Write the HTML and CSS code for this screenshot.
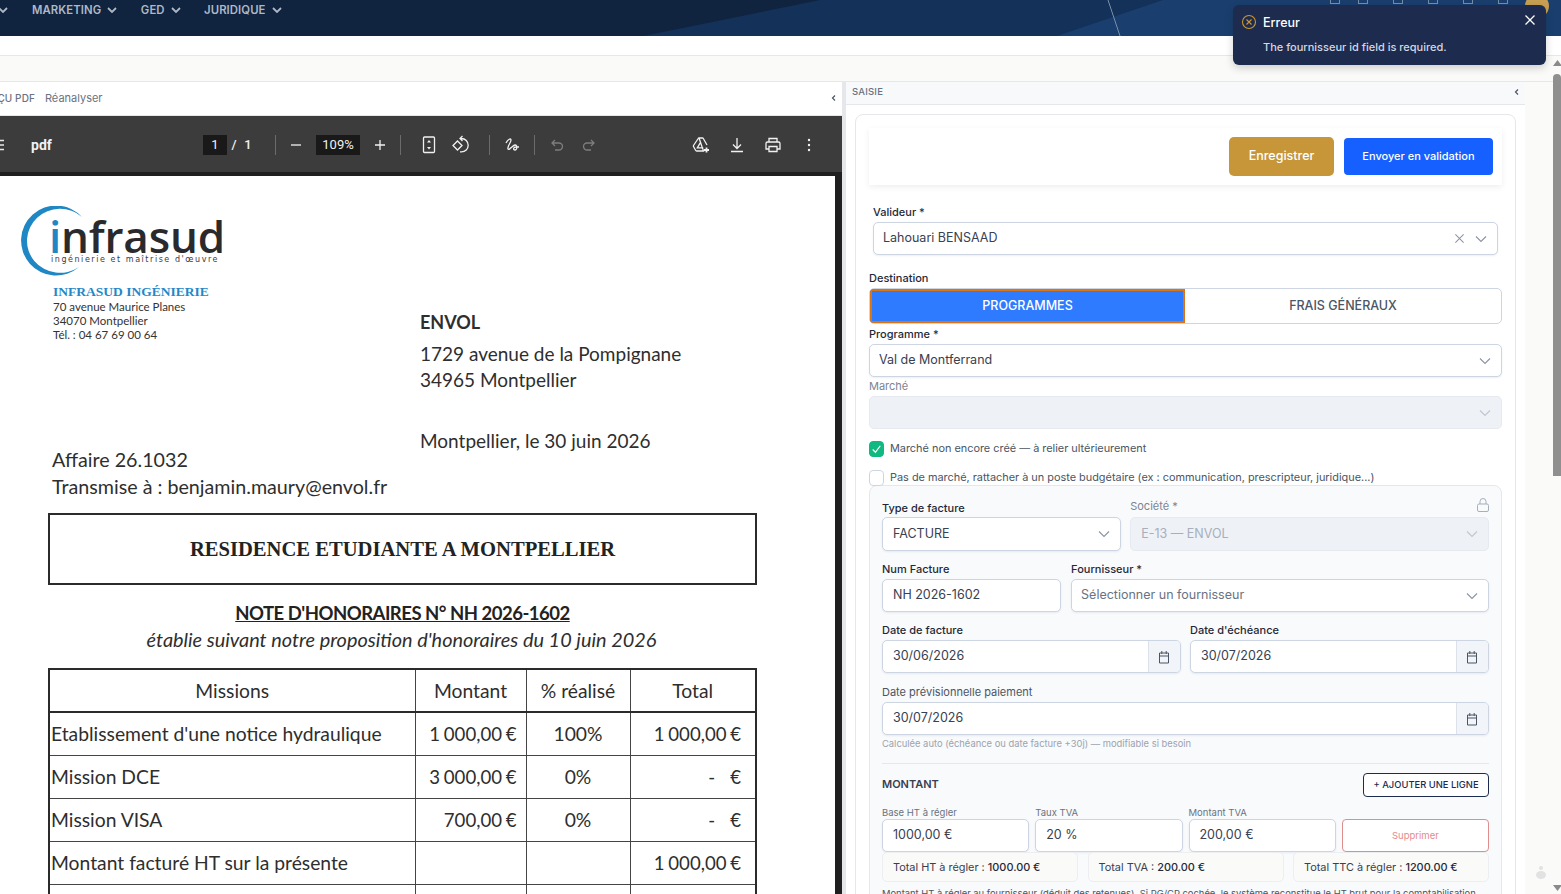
FILE: index.html
```html
<!DOCTYPE html>
<html lang="fr">
<head>
<meta charset="utf-8">
<title>Saisie facture</title>
<link rel="stylesheet" href="styles.css">
</head>
<body>

<header class="topbar">
  <svg class="topbar-bg" viewBox="0 0 1561 36" preserveAspectRatio="none" aria-hidden="true">
    <polygon points="0,0 820,0 643,36 0,36" fill="#10233f"/>
    <polygon points="1163,0 1561,0 1561,36 1057,36" fill="#1a3f6e"/>
    <line x1="1108" y1="0" x2="1120" y2="36" stroke="#7d8ea6" stroke-width="1"/>
  </svg>
  <nav class="nav">
    <span class="nav-item nav-cut"><svg class="nav-chev" viewBox="0 0 10 6"><path d="M1 1l4 4 4-4"/></svg></span>
    <span class="nav-item">MARKETING <svg class="nav-chev" viewBox="0 0 10 6"><path d="M1 1l4 4 4-4"/></svg></span>
    <span class="nav-item">GED <svg class="nav-chev" viewBox="0 0 10 6"><path d="M1 1l4 4 4-4"/></svg></span>
    <span class="nav-item">JURIDIQUE <svg class="nav-chev" viewBox="0 0 10 6"><path d="M1 1l4 4 4-4"/></svg></span>
  </nav>
  <div class="top-right">
    <span class="top-ico top-ico-first"></span>
    <span class="top-ico"></span>
    <span class="top-ico"></span>
    <span class="top-ico"></span>
    <span class="top-ico"></span>
    <span class="top-ico"></span>
    <span class="avatar"></span>
  </div>
</header>

<div class="toast">
  <svg class="toast-icon" viewBox="0 0 16 16"><circle cx="8" cy="8" r="6.500"/><path d="M5.500 5.500l5 5M10.500 5.500l-5 5"/></svg>
  <div class="toast-body">
    <div class="toast-title">Erreur</div>
    <div class="toast-msg">The fournisseur id field is required.</div>
  </div>
  <svg class="toast-close" viewBox="0 0 12 12"><path d="M1.500 1.500l9 9M10.500 1.500l-9 9"/></svg>
</div>

<div class="white-strip"></div>
<div class="grey-strip"></div>

<div class="workspace">
  <section class="left-panel">
    <div class="left-head">
      <span class="left-title">APERÇU PDF</span>
      <span class="left-link">Réanalyser</span>
      <svg class="collapse" viewBox="0 0 6 8"><path d="M4 1.500L1.500 4 4 6.500"/></svg>
    </div>

    <div class="pdf-toolbar">
      <svg class="pdf-menu" viewBox="0 0 20 20"><path d="M3 5.500h14M3 10h14M3 14.500h14"/></svg>
      <span class="pdf-name">pdf</span>
      <span class="pdf-pages"><span class="pdf-box pdf-box-page">1</span><span class="pdf-of">/</span><span class="pdf-of">1</span></span>
      <span class="pdf-sep pdf-sep-a"></span>
      <svg class="pdf-ico ico-minus" viewBox="0 0 20 20"><path d="M5 10h10"/></svg>
      <span class="pdf-box pdf-box-zoom">109%</span>
      <svg class="pdf-ico ico-plus" viewBox="0 0 20 20"><path d="M5 10h10M10 5v10"/></svg>
      <span class="pdf-sep pdf-sep-b"></span>
      <svg class="pdf-ico ico-fit" viewBox="0 0 20 20"><rect x="4.500" y="2" width="11" height="15.500" rx="1"/><path class="solid" d="M10 5l2 2.500H8zM10 14.500L8 12h4z"/></svg>
      <svg class="pdf-ico ico-rotate" viewBox="0 0 20 20"><path d="M6.500 6l4.500 4.500-4.500 4.500L2 10.500z"/><path d="M9 3.500h1.500a6.700 6.700 0 0 1 0 13.400H9M11.500 1L9 3.500 11.500 6"/></svg>
      <span class="pdf-sep pdf-sep-c"></span>
      <svg class="pdf-ico ico-draw" viewBox="0 0 20 20"><path d="M4 8C6 4 9 3 9 5 9 8 5 11 6 14c1 2 5-4 7-4 3 0 2 5 0 5s-2-3 1-3h3"/></svg>
      <span class="pdf-sep pdf-sep-d"></span>
      <svg class="pdf-ico dim ico-undo" viewBox="0 0 20 20"><path d="M8 5L5 8l3 3M5 8h7a3.500 3.500 0 0 1 0 7H8"/></svg>
      <svg class="pdf-ico dim ico-redo" viewBox="0 0 20 20"><path d="M12 5l3 3-3 3M15 8H8a3.500 3.500 0 0 0 0 7h4"/></svg>
      <svg class="pdf-ico ico-drive" viewBox="0 0 20 20"><path d="M8 3h3.500a1 1 0 0 1 .8.500l3.700 6.500M12.500 16H5.500a1 1 0 0 1-.8-.500L2.500 11.500a1 1 0 0 1 0-1L7.200 3.500A1 1 0 0 1 8 3zM9.800 6.800l-3.500 6h6"/><path class="thick" d="M15.500 12.500v5M13 15h5"/></svg>
      <svg class="pdf-ico ico-down" viewBox="0 0 20 20"><path d="M10 3v10M6 9.500l4 4 4-4M4 16.500h12"/></svg>
      <svg class="pdf-ico ico-print" viewBox="0 0 20 20"><path d="M6 7V3.500h8V7M5.500 14H3V8.500A1.500 1.500 0 0 1 4.500 7h11A1.500 1.500 0 0 1 17 8.500V14h-2.500M6 11.500h8v5H6z"/></svg>
      <svg class="pdf-ico ico-more" viewBox="0 0 20 20"><circle cx="10" cy="5" r="1.200"/><circle cx="10" cy="10" r="1.200"/><circle cx="10" cy="15" r="1.200"/></svg>
    </div>

    <div class="pdf-stage">
      <article class="pdf-page">
        <div class="letter-top">
          <div class="letter-left">
            <div class="logo">
              <svg class="logo-arc" viewBox="0 0 63 71"><path d="M62 11A35 35 0 1 0 59 61 33 32 0 1 1 62 11z"/></svg>
              <div class="logo-word"><span class="logo-i">i</span>nfrasud</div>
              <div class="logo-tag">ingénierie et maîtrise d'œuvre</div>
            </div>
            <div class="company">
              <div class="company-name">INFRASUD INGÉNIERIE</div>
              <div>70 avenue Maurice Planes</div>
              <div>34070 Montpellier</div>
              <div>Tél. : 04 67 69 00 64</div>
            </div>
            <div class="affaire">
              <div>Affaire 26.1032</div>
              <div>Transmise à : benjamin.maury@envol.fr</div>
            </div>
          </div>
          <div class="letter-right">
            <div class="dest-name">ENVOL</div>
            <div>1729 avenue de la Pompignane</div>
            <div>34965 Montpellier</div>
            <div class="letter-date">Montpellier, le 30 juin 2026</div>
          </div>
        </div>

        <div class="object-box">RESIDENCE ETUDIANTE A MONTPELLIER</div>
        <h2 class="note-title">NOTE D'HONORAIRES N° NH 2026-1602</h2>
        <p class="note-sub">établie suivant notre proposition d'honoraires du 10 juin 2026</p>

        <table class="note-table">
          <colgroup><col class="col-a"><col class="col-b"><col class="col-c"><col class="col-d"></colgroup>
          <tr class="head"><td>Missions</td><td>Montant</td><td>% réalisé</td><td>Total</td></tr>
          <tr><td class="l">Etablissement d'une notice hydraulique</td><td class="r">1 000,00 €</td><td>100%</td><td class="r tot">1 000,00 €</td></tr>
          <tr><td class="l">Mission DCE</td><td class="r">3 000,00 €</td><td>0%</td><td class="r tot">-&nbsp;&nbsp;&nbsp;&nbsp;€</td></tr>
          <tr><td class="l">Mission VISA</td><td class="r">700,00 €</td><td>0%</td><td class="r tot">-&nbsp;&nbsp;&nbsp;&nbsp;€</td></tr>
          <tr><td class="l">Montant facturé HT sur la présente</td><td></td><td></td><td class="r tot">1 000,00 €</td></tr>
          <tr><td></td><td></td><td></td><td></td></tr>
        </table>
      </article>
    </div>
  </section>

  <div class="splitter"></div>

  <section class="right-panel">
    <div class="right-head">
      <span>SAISIE</span>
      <svg class="collapse" viewBox="0 0 6 8"><path d="M4 1.500L1.500 4 4 6.500"/></svg>
    </div>

    <div class="card">
      <div class="action-bar">
        <button class="btn btn-gold">Enregistrer</button>
        <button class="btn btn-blue">Envoyer en validation</button>
      </div>

      <div class="block block-valideur">
        <label class="lbl">Valideur *</label>
        <div class="ctl">
          <span class="ctl-text">Lahouari BENSAAD</span>
          <svg class="ico-clear" viewBox="0 0 12 12"><path d="M1.500 1.500l9 9M10.500 1.500l-9 9"/></svg>
          <svg class="chev" viewBox="0 0 12 8"><path d="M1 1.500l5 5 5-5"/></svg>
        </div>
      </div>

      <div class="block block-dest">
        <label class="lbl">Destination</label>
        <div class="toggle">
          <span class="toggle-on">PROGRAMMES</span>
          <span class="toggle-off">FRAIS GÉNÉRAUX</span>
        </div>
      </div>

      <div class="block block-prog">
        <label class="lbl">Programme *</label>
        <div class="ctl ctl-sm">
          <span class="ctl-text">Val de Montferrand</span>
          <svg class="chev" viewBox="0 0 12 8"><path d="M1 1.500l5 5 5-5"/></svg>
        </div>
      </div>

      <div class="block block-marche">
        <label class="lbl lbl-off">Marché</label>
        <div class="ctl ctl-off">
          <span class="ctl-text"></span>
          <svg class="chev" viewBox="0 0 12 8"><path d="M1 1.500l5 5 5-5"/></svg>
        </div>
      </div>

      <div class="check check-a">
        <span class="box box-on"><svg viewBox="0 0 12 12"><path d="M2.500 6.500l2.500 2.500 4.500-6"/></svg></span>
        <span class="check-text">Marché non encore créé — à relier ultérieurement</span>
      </div>
      <div class="check check-b">
        <span class="box"></span>
        <span class="check-text">Pas de marché, rattacher à un poste budgétaire (ex : communication, prescripteur, juridique...)</span>
      </div>

      <div class="sub-panel">
        <div class="row row-type">
          <div>
            <label class="lbl">Type de facture</label>
            <div class="ctl">
              <span class="ctl-text">FACTURE</span>
              <svg class="chev" viewBox="0 0 12 8"><path d="M1 1.500l5 5 5-5"/></svg>
            </div>
          </div>
          <div>
            <div class="lbl-lock">
              <label class="lbl lbl-off">Société *</label>
              <svg class="lock" viewBox="0 0 12 14"><rect x=".5" y="6" width="11" height="7.500" rx="1.500"/><path d="M3 6V3.500a3 3 0 0 1 6 0V6"/></svg>
            </div>
            <div class="ctl ctl-off">
              <span class="ctl-text">E-13 — ENVOL</span>
              <svg class="chev" viewBox="0 0 12 8"><path d="M1 1.500l5 5 5-5"/></svg>
            </div>
          </div>
        </div>

        <div class="row row-num">
          <div>
            <label class="lbl">Num Facture</label>
            <div class="ctl ctl-sm"><span class="ctl-text">NH 2026-1602</span></div>
          </div>
          <div>
            <label class="lbl">Fournisseur *</label>
            <div class="ctl ctl-sm">
              <span class="ctl-text placeholder">Sélectionner un fournisseur</span>
              <svg class="chev" viewBox="0 0 12 8"><path d="M1 1.500l5 5 5-5"/></svg>
            </div>
          </div>
        </div>

        <div class="row row-dates">
          <div>
            <label class="lbl">Date de facture</label>
            <div class="ctl ctl-sm ctl-date">
              <span class="ctl-text">30/06/2026</span>
              <span class="addon"><svg viewBox="0 0 12 14"><path d="M1.500 3h9v10h-9zM1.500 6h9M3.800 1v3M8.200 1v3"/></svg></span>
            </div>
          </div>
          <div>
            <label class="lbl">Date d'échéance</label>
            <div class="ctl ctl-sm ctl-date">
              <span class="ctl-text">30/07/2026</span>
              <span class="addon"><svg viewBox="0 0 12 14"><path d="M1.500 3h9v10h-9zM1.500 6h9M3.800 1v3M8.200 1v3"/></svg></span>
            </div>
          </div>
        </div>

        <div class="row-prev">
          <label class="lbl lbl-mid">Date prévisionnelle paiement</label>
          <div class="ctl ctl-sm ctl-date">
            <span class="ctl-text">30/07/2026</span>
            <span class="addon"><svg viewBox="0 0 12 14"><path d="M1.500 3h9v10h-9zM1.500 6h9M3.800 1v3M8.200 1v3"/></svg></span>
          </div>
          <div class="hint">Calculée auto (échéance ou date facture +30j) — modifiable si besoin</div>
        </div>

        <div class="amount-head">
          <span class="amount-title">MONTANT</span>
          <button class="btn-line">+ AJOUTER UNE LIGNE</button>
        </div>

        <div class="amount-row">
          <div><label class="lbl-xs">Base HT à régler</label><div class="ctl ctl-sm"><span class="ctl-text">1000,00 €</span></div></div>
          <div><label class="lbl-xs">Taux TVA</label><div class="ctl ctl-sm"><span class="ctl-text">20 %</span></div></div>
          <div><label class="lbl-xs">Montant TVA</label><div class="ctl ctl-sm"><span class="ctl-text">200,00 €</span></div></div>
          <div><label class="lbl-xs">&nbsp;</label><button class="btn-del">Supprimer</button></div>
        </div>

        <div class="totals">
          <div class="total">Total HT à régler : <b>1000.00 €</b></div>
          <div class="total">Total TVA : <b>200.00 €</b></div>
          <div class="total">Total TTC à régler : <b>1200.00 €</b></div>
        </div>
        <p class="amount-note">Montant HT à régler au fournisseur (déduit des retenues). Si PG/CP cochée, le système reconstitue le HT brut pour la comptabilisation</p>
      </div>
    </div>
  </section>

  <div class="gutter">
    <svg class="chat-ghost" viewBox="0 0 12 14"><circle cx="6" cy="3" r="2"/><path d="M1 10a5 4 0 0 1 10 0 5 4 0 0 1-10 0z"/></svg>
  </div>

  <div class="scrollbar">
    <svg class="sb-arrow" viewBox="0 0 9 6"><path d="M4.500 0L9 6H0z"/></svg>
    <div class="sb-thumb"></div>
    <svg class="sb-arrow sb-down" viewBox="0 0 9 6"><path d="M0 0h9L4.500 6z"/></svg>
  </div>
</div>

</body>
</html>
```

FILE: styles.css
```css
*{ box-sizing:border-box; }
html,body{ margin:0; padding:0; height:894px; overflow:hidden; }
body{ background:#fafaf9; font-family:Inter,"Liberation Sans",sans-serif; color:#374151; font-size:12px; }
p,h2{ margin:0; }
svg{ display:block; fill:none; }

/* top bar */
.topbar{ position:relative; height:36px; background:#133159; overflow:hidden; display:flex; }
.topbar-bg{ position:absolute; left:0; top:0; width:100%; height:100%; }
.nav{ position:relative; display:flex; height:20px; align-items:center; }
.nav-item{ display:flex; align-items:center; gap:6px; font-size:11.300px; font-weight:600; color:#aeb8c6; margin-right:23.500px; letter-spacing:.1px; }
.nav-cut{ margin-left:-2px; margin-right:24px; }
.nav-chev{ width:10px; height:6px; }
.nav-chev path{ stroke:#aeb8c6; stroke-width:1.800; }
.top-right{ position:relative; margin-left:auto; padding-right:12px; display:flex; align-items:flex-start; }
.top-ico{ width:10px; height:4px; border:1px solid rgba(198,206,219,.55); border-top:0; margin-right:25px; }
.top-ico-first{ margin-right:18px; }
.top-ico:nth-child(6){ margin-right:17px; }
.avatar{ display:block; width:24px; height:24px; margin-top:-6px; border-radius:50%; background:#c8a052; }

/* toast */
.toast{ position:absolute; z-index:5; left:1233px; top:5px; width:313px; height:60px; background:#1c2b4e; border-radius:6px; box-shadow:0 3px 8px rgba(0,0,0,.18); display:flex; padding:10px 10px 0 8px; }
.toast-icon{ width:16px; height:16px; margin-top:-1px; flex:none; }
.toast-icon circle,.toast-icon path{ stroke:#d0962f; stroke-width:1.100; }
.toast-body{ margin-left:6px; flex:1; }
.toast-title{ font-size:12.500px; font-weight:500; color:#fff; line-height:15px; }
.toast-msg{ font-size:11px; font-weight:500; color:#d4d8e2; margin-top:10px; line-height:14px; }
.toast-close{ width:12px; height:12px; margin-top:-1px; }
.toast-close path{ stroke:#fff; stroke-width:1.300; }

.white-strip{ height:20px; background:#fff; border-bottom:1px solid #e5e7eb; }
.grey-strip{ height:26px; background:#fafaf9; border-bottom:1px solid #e5e7eb; }

.workspace{ display:flex; height:812px; overflow:hidden; }

/* left panel */
.left-panel{ width:842px; flex:none; background:#fff; display:flex; flex-direction:column; }
.left-head{ height:34px; flex:none; display:flex; align-items:center; border-bottom:1px solid #e5e7eb; padding:0 5px 1px 0; }
.left-title{ margin-left:-29px; font-size:10px; font-weight:500; color:#6b7280; letter-spacing:.1px; }
.left-link{ margin-left:10px; font-size:11px; color:#6b7280; }
.collapse{ width:6px; height:8px; margin-left:auto; }
.collapse path{ stroke:#4b5563; stroke-width:1.200; }

.pdf-toolbar{ height:56px; flex:none; background:#3c3c3c; display:flex; align-items:center; color:#f1f1f1; padding-top:1px; }
.pdf-menu{ width:20px; height:20px; margin-left:-13px; }
.pdf-menu path{ stroke:#e8e8e8; stroke-width:1.600; }
.pdf-name{ margin-left:24px; font-family:Roboto,"Liberation Sans",sans-serif; font-size:14px; font-weight:700; width:172px; }
.pdf-pages{ display:flex; align-items:center; }
.pdf-box{ background:#191919; height:20px; line-height:20px; text-align:center; font-family:Roboto,"Liberation Sans",sans-serif; font-size:13px; color:#f1f1f1; }
.pdf-box-page{ width:24px; }
.pdf-box-zoom{ width:44px; margin-left:10px; }
.pdf-of{ width:14px; text-align:center; font-family:Roboto,"Liberation Sans",sans-serif; font-size:13px; font-weight:500; }
.pdf-sep{ width:1px; height:20px; background:#6b6b6b; flex:none; }
.pdf-sep-a{ margin-left:20px; }
.pdf-sep-b{ margin-left:10px; }
.pdf-sep-c{ margin-left:18px; }
.pdf-sep-d{ margin-left:12px; }
.pdf-ico{ width:20px; height:20px; flex:none; }
.pdf-ico path,.pdf-ico rect{ stroke:#f1f1f1; stroke-width:1.300; }
.pdf-ico path.solid{ fill:#f1f1f1; stroke:none; }
.pdf-ico path.thick{ stroke-width:1.800; }
.pdf-ico circle{ fill:#f1f1f1; }
.pdf-ico.dim path{ stroke:#7d7d7d; }
.ico-minus{ margin-left:10px; }
.ico-plus{ margin-left:10px; }
.ico-fit{ margin-left:18px; }
.ico-rotate{ margin-left:12px; }
.ico-draw{ margin-left:12px; }
.ico-undo{ margin-left:12px; }
.ico-redo{ margin-left:12px; }
.ico-drive{ margin-left:92px; }
.ico-down{ margin-left:16px; }
.ico-print{ margin-left:16px; }
.ico-more{ margin-left:16px; }

.pdf-stage{ flex:1; background:#1f1f1f; padding:4px 6px 0 0; overflow:hidden; }
.pdf-page{ width:835px; height:720px; background:#fff; padding:0 78px 0 48px; color:#2e2e2e; font-family:Lato,"Liberation Sans",sans-serif; }

.letter-top{ display:grid; grid-template-columns:372px 1fr; }
.letter-left{ padding-top:29px; }
.logo{ position:relative; height:78px; }
.logo-arc{ position:absolute; left:-28px; top:1px; width:63px; height:71px; }
.logo-arc path{ fill:#1f87c4; }
.logo-word{ position:absolute; left:1px; top:14px; font-family:"Open Sans","Liberation Sans",sans-serif; font-size:44px; line-height:35px; font-weight:600; color:#2a2a2c; white-space:nowrap; letter-spacing:-.2px; }
.logo-i{ color:#1f87c4; }
.logo-tag{ position:absolute; left:3px; top:49px; font-family:"DejaVu Sans",sans-serif; font-size:8px; letter-spacing:1.550px; color:#3c3c3e; white-space:nowrap; line-height:12px; }
.company{ margin:1px 0 0 5px; font-size:11.500px; line-height:14px; color:#333; }
.company-name{ font-family:"Liberation Serif",serif; font-weight:700; font-size:13.500px; color:#2487c8; line-height:16px; }
.affaire{ margin:104px 0 0 4px; font-size:19.700px; line-height:27px; }
.letter-right{ padding-top:133px; font-size:19px; line-height:26px; }
.dest-name{ font-weight:700; font-size:18px; margin-bottom:6px; }
.letter-date{ margin-top:35px; }

.object-box{ margin-top:13px; height:72px; border:2px solid #2b2b2b; display:flex; align-items:center; justify-content:center; font-family:"Liberation Serif",serif; font-weight:700; font-size:20.600px; color:#222; }
.note-title{ margin-top:16px; text-align:center; font-size:18.500px; letter-spacing:-.5px; line-height:25px; font-weight:700; text-decoration:underline; color:#222; }
.note-sub{ margin-top:0; text-align:center; font-size:19.900px; line-height:26px; font-style:italic; margin-left:-2px; }

.note-table{ margin-top:16px; width:707px; border-collapse:collapse; table-layout:fixed; font-size:19.300px; border:2px solid #2b2b2b; }
.col-a{ width:366px; }
.col-b{ width:111px; }
.col-c{ width:104px; }
.col-d{ width:126px; }
.note-table td{ height:43px; border:1px solid #444; text-align:center; padding:0 6px; white-space:nowrap; }
.note-table .head td{ border-bottom:2px solid #2b2b2b; }
.note-table td.l{ text-align:left; padding-left:1px; }
.note-table td.r{ text-align:right; padding-right:9px; font-size:18.600px; word-spacing:-1px; }
.note-table td.tot{ padding-right:14px; }

.splitter{ width:4px; flex:none; background:#e5e7eb; }

/* right panel */
.right-panel{ width:679px; flex:none; background:#fff; overflow:hidden; }
.right-head{ height:23px; background:#f8f9fb; border-bottom:1px solid #e5e7eb; display:flex; align-items:center; padding:0 5px 3px 6px; font-size:9.500px; font-weight:500; color:#6b7280; letter-spacing:.2px; }
.card{ margin:9px 9px 0 9px; border:1px solid #e5e7eb; border-radius:8px 8px 0 0; padding:13px 13px 0; background:#fff; }
.action-bar{ height:57px; display:flex; justify-content:flex-end; align-items:center; gap:10px; padding-right:9px; background:#fff; box-shadow:0 2px 6px rgba(0,0,0,.07); margin-bottom:21px; }
.btn{ border:0; color:#fff; font-family:inherit; font-weight:500; padding:0 0 2px; }
.btn-gold{ width:105px; height:39px; background:#c69639; border-radius:5px; font-size:12.500px; }
.btn-blue{ width:149px; height:37px; background:#1660ff; border-radius:4px; font-size:11px; }

.lbl{ display:block; height:14px; line-height:14px; font-size:11px; font-weight:500; color:#1f2937; margin-bottom:3px; }
.block .lbl{ line-height:12px; margin-bottom:2px; }
.row-type .lbl{ margin-bottom:2px; }
.lbl-off{ color:#7c8493; font-weight:400; }
.lbl-mid{ color:#4b5563; font-weight:400; }
.lbl-xs{ display:block; height:12px; line-height:12px; font-size:9.500px; color:#6b7280; }

.ctl{ height:34px; border:1px solid #cdd5e3; border-radius:5px; background:#fff; display:flex; align-items:center; padding:0 10px; box-shadow:0 1px 2px rgba(30,50,90,.08); }
.block .ctl{ padding-left:9px; }
.ctl-sm{ height:33px; }
.ctl-text{ flex:1; font-size:12.500px; color:#374151; white-space:nowrap; padding-bottom:2px; }
.placeholder{ color:#6b7280; margin-left:-1px; }
.chev{ width:12px; height:8px; flex:none; }
.chev path{ stroke:#8b93a3; stroke-width:1.100; }
.ico-clear{ width:11px; height:11px; margin-right:10px; flex:none; }
.ico-clear path{ stroke:#8b93a3; stroke-width:1.100; }
.ctl-off{ background:#eef1f6; border-color:#e6e9ef; box-shadow:none; }
.ctl-off .ctl-text{ color:#a7afbc; }
.ctl-off .chev path{ stroke:#c0c6d1; }

.block-valideur{ padding:0 4px; }
.block-valideur .ctl{ height:33px; }
.block-dest{ margin-top:17px; }
.block-prog{ margin-top:4px; }
.block-marche{ margin-top:3px; }
.block-marche .ctl{ height:33px; }

.toggle{ display:flex; height:36px; border:1px solid #cdd5e3; border-radius:5px; overflow:hidden; font-size:12.500px; font-weight:500; background:#fff; }
.toggle-on{ width:315px; background:#2e7bff; border:2px solid #dc7414; color:#fff; display:flex; align-items:center; justify-content:center; padding-bottom:1px; }
.toggle-off{ flex:1; display:flex; align-items:center; justify-content:center; color:#4b5563; padding-bottom:1px; }

.check{ display:flex; align-items:center; gap:6px; font-size:10.900px; color:#4b5563; height:16px; }
.check-text{ padding-bottom:2px; }
.check-a{ margin-top:12px; }
.check-b{ margin-top:13px; }
.box{ width:15px; height:16px; border:1px solid #cdd5e3; border-radius:4px; background:#fff; flex:none; }
.box-on{ background:#10b981; border-color:#10b981; }
.box-on svg{ width:13px; height:14px; }
.box-on path{ stroke:#fff; stroke-width:1.100; }

.sub-panel{ margin-top:-1px; background:#f8fafc; border:1px solid #e5e7eb; border-radius:8px 8px 0 0; padding:13px 12px 0; height:420px; }
.row{ display:grid; align-items:end; }
.row-type{ grid-template-columns:2fr 3fr; column-gap:9px; }
.row-num{ grid-template-columns:3fr 7fr; column-gap:10px; margin-top:11px; }
.row-dates{ grid-template-columns:1fr 1fr; column-gap:9px; margin-top:11px; }
.row-prev{ margin-top:12px; }
.lbl-lock{ display:flex; justify-content:space-between; align-items:center; height:18px; }
.row-type .lbl-lock .lbl{ margin:0 0 4px; }
.lock{ width:12px; height:14px; margin-bottom:6px; }
.lock rect,.lock path{ stroke:#a7afbc; stroke-width:1; }
.ctl-date{ padding-right:0; overflow:hidden; }
.addon{ width:32px; flex:none; align-self:stretch; background:#f1f4f8; border-left:1px solid #dde2ea; display:flex; align-items:center; justify-content:center; padding-right:1px; }
.addon svg{ width:12px; height:14px; }
.addon path{ stroke:#4b5563; stroke-width:1; }
.hint{ margin-top:3px; height:12px; line-height:12px; font-size:9.400px; color:#9ca3af; }

.amount-head{ margin-top:13px; border-top:1px solid #e5e7eb; padding-top:9px; display:flex; justify-content:space-between; align-items:center; }
.amount-title{ font-size:11px; font-weight:600; color:#374151; padding-bottom:3px; }
.btn-line{ width:126px; height:24px; background:#fff; border:1px solid #1c2b4e; border-radius:4px; font-family:inherit; font-size:9.400px; font-weight:500; color:#1c2b4e; padding:0 0 1px; }

.amount-row{ margin-top:10px; display:grid; grid-template-columns:repeat(4,1fr); column-gap:6px; }
.btn-del{ display:block; width:100%; height:33px; background:#fff; border:1px solid #e08d8d; border-radius:4px; font-family:inherit; font-size:9.500px; color:#e58a8a; }
.totals{ display:grid; grid-template-columns:repeat(3,1fr); column-gap:9.500px; }
.total{ height:30px; background:#fafaf9; border:1px solid #eceef2; border-radius:5px; display:flex; align-items:center; padding-left:10px; font-size:10.900px; color:#374151; white-space:pre; }
.total b{ font-weight:500; color:#1f2937; }
.amount-note{ margin-top:6px; font-size:9.400px; line-height:12px; color:#4b5563; white-space:nowrap; }

/* gutter + scrollbar */
.gutter{ flex:1; position:relative; background:#fafaf9; }
.chat-ghost{ position:absolute; left:10px; top:783px; width:12px; height:14px; }
.chat-ghost circle,.chat-ghost path{ fill:#e2e2e2; }
.scrollbar{ position:absolute; right:0; top:56px; width:8px; height:838px; background:#fafaf9; z-index:4; display:flex; flex-direction:column; align-items:center; }
.sb-arrow{ width:9px; height:6px; margin-top:4px; flex:none; }
.sb-arrow path{ fill:#8a8a8a; }
.sb-thumb{ width:8px; height:402px; margin-top:8px; background:#8f8f8f; border-radius:4px 4px 0 0; }
.sb-down{ margin-top:auto; margin-bottom:3px; }
```
